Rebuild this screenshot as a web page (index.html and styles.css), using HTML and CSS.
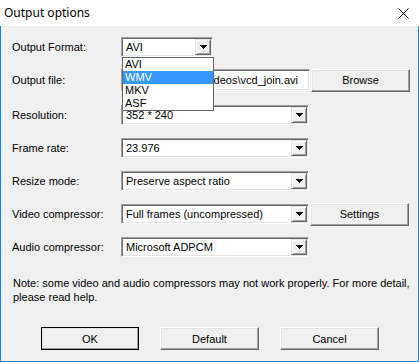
FILE: index.html
```html
<!DOCTYPE html>
<html>
<head>
    <title>Output options</title>
    <link rel="stylesheet" href="styles.css">
</head>
<body>
    <div class="window">
        <div class="titlebar">
            <span class="title">Output options</span>
            <svg class="close" width="11" height="11" viewBox="0 0 11 11">
                <path d="M0.5 0.5L10.5 10.5M10.5 0.5L0.5 10.5" stroke="#000" stroke-width="1"/>
            </svg>
        </div>

        <div class="content">
            <div class="row">
                <label>Output Format:</label>
                <div class="combo combo-small">
                    <span class="value">AVI</span>
                    <span class="drop"><svg width="7" height="4" viewBox="0 0 7 4"><path d="M0 0h7v1H0zM1 1h5v1H1zM2 2h3v1H2zM3 3h1v1H3z"/></svg></span>
                </div>
                <ul class="droplist">
                    <li>AVI</li>
                    <li class="selected">WMV</li>
                    <li>MKV</li>
                    <li>ASF</li>
                </ul>
            </div>

            <div class="row">
                <label>Output file:</label>
                <div class="field">
                    <span class="value">C:\Videos\vcd_join.avi</span>
                </div>
                <button class="btn side-btn" type="button">Browse</button>
            </div>

            <div class="row row-spaced">
                <label>Resolution:</label>
                <div class="combo">
                    <span class="value">352 * 240</span>
                    <span class="drop"><svg width="7" height="4" viewBox="0 0 7 4"><path d="M0 0h7v1H0zM1 1h5v1H1zM2 2h3v1H2zM3 3h1v1H3z"/></svg></span>
                </div>
            </div>

            <div class="row">
                <label>Frame rate:</label>
                <div class="combo">
                    <span class="value">23.976</span>
                    <span class="drop"><svg width="7" height="4" viewBox="0 0 7 4"><path d="M0 0h7v1H0zM1 1h5v1H1zM2 2h3v1H2zM3 3h1v1H3z"/></svg></span>
                </div>
            </div>

            <div class="row">
                <label>Resize mode:</label>
                <div class="combo">
                    <span class="value">Preserve aspect ratio</span>
                    <span class="drop"><svg width="7" height="4" viewBox="0 0 7 4"><path d="M0 0h7v1H0zM1 1h5v1H1zM2 2h3v1H2zM3 3h1v1H3z"/></svg></span>
                </div>
            </div>

            <div class="row">
                <label>Video compressor:</label>
                <div class="combo">
                    <span class="value">Full frames (uncompressed)</span>
                    <span class="drop"><svg width="7" height="4" viewBox="0 0 7 4"><path d="M0 0h7v1H0zM1 1h5v1H1zM2 2h3v1H2zM3 3h1v1H3z"/></svg></span>
                </div>
                <button class="btn side-btn" type="button">Settings</button>
            </div>

            <div class="row">
                <label>Audio compressor:</label>
                <div class="combo">
                    <span class="value">Microsoft ADPCM</span>
                    <span class="drop"><svg width="7" height="4" viewBox="0 0 7 4"><path d="M0 0h7v1H0zM1 1h5v1H1zM2 2h3v1H2zM3 3h1v1H3z"/></svg></span>
                </div>
            </div>

            <p class="note">Note: some video and audio compressors may not work properly. For more detail,<br>please read help.</p>

            <div class="buttons">
                <button class="btn btn-default" type="button">OK</button>
                <button class="btn" type="button">Default</button>
                <button class="btn" type="button">Cancel</button>
            </div>
        </div>
    </div>
</body>
</html>
```

FILE: styles.css
```css
body {
  margin: 0;
  background-color: #f0f0f0;
  font-family: "Liberation Sans", Arial, sans-serif;
  font-size: 11px;
  color: #000;
}
.window {
  width: 419px;
  height: 362px;
  box-sizing: border-box;
  border: 1px solid #1883d7;
  border-top: none;
  background-color: #f0f0f0;
}
.titlebar {
  height: 26px;
  margin: 0 -1px;
  background-color: #fff;
  display: flex;
  align-items: center;
  justify-content: space-between;
  padding: 0 10px 0 4px;
}
.title {
  font-family: "Noto Sans", "Liberation Sans", sans-serif;
  font-size: 12px;
  padding-bottom: 2px;
}
.close {
  display: block;
}
.content {
  padding: 10px 0 0 11px;
  display: flex;
  flex-direction: column;
  gap: 11px;
}
.row {
  position: relative;
  display: flex;
  align-items: center;
  height: 22px;
}
.row-spaced {
  margin-top: 2px;
}
label {
  width: 109px;
  flex-shrink: 0;
}

/* sunken controls */
.combo,
.field {
  box-sizing: border-box;
  display: flex;
  align-items: center;
  background-color: #fff;
  border: 1px solid;
  border-color: #a0a0a0 #fff #fff #a0a0a0;
  box-shadow: inset 1px 1px #696969, inset -1px -1px #e3e3e3;
  overflow: hidden;
  white-space: nowrap;
}
.combo {
  width: 188px;
  height: 20px;
  padding: 1px;
}
.combo-small {
  width: 92px;
}
.combo .value {
  flex: 1;
  padding-left: 3px;
}
.drop {
  width: 16px;
  height: 16px;
  box-sizing: border-box;
  display: flex;
  align-items: center;
  justify-content: center;
  background-color: #f0f0f0;
  border: 1px solid;
  border-color: #e3e3e3 #696969 #696969 #e3e3e3;
  box-shadow: inset 1px 1px #fff, inset -1px -1px #a0a0a0;
}
.drop svg {
  display: block;
}
.field {
  width: 189px;
  height: 22px;
  justify-content: flex-end;
  padding-right: 11px;
}
.field .value {
  flex-shrink: 0;
}

.droplist {
  position: absolute;
  left: 110px;
  top: 21px;
  width: 92px;
  box-sizing: border-box;
  margin: 0;
  padding: 0;
  list-style: none;
  background-color: #fff;
  border: 1px solid #646464;
  z-index: 2;
}
.droplist li {
  height: 13px;
  line-height: 13px;
  padding-left: 2px;
}
.droplist .selected {
  background-color: #3399ff;
  color: #fff;
}

/* raised buttons */
.btn {
  font-family: "Liberation Sans", Arial, sans-serif;
  font-size: 11px;
  color: #000;
  width: 98px;
  height: 23px;
  padding: 0;
  background-color: #f0f0f0;
  border: 1px solid;
  border-color: #fff #696969 #696969 #fff;
  box-shadow: inset -1px -1px #a0a0a0, inset 1px 1px #e3e3e3;
}
.side-btn {
  width: 99px;
  margin-left: 1px;
}
.btn-default {
  outline: 1px solid #000;
  outline-offset: -1px;
}
.note {
  margin: 7px 0 0 1px;
  line-height: 14px;
  white-space: nowrap;
}
.buttons {
  display: flex;
  gap: 21px;
  margin: 12px 0 0 29px;
}
.buttons .btn:not(.btn-default) {
  width: 99px;
}
```
